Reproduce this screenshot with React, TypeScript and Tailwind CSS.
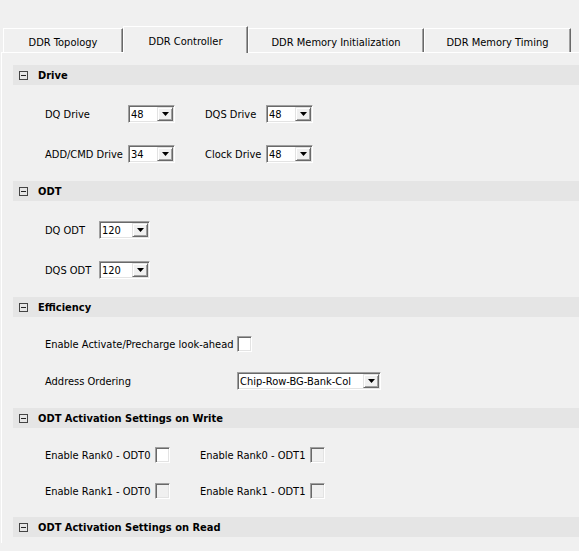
import React from "react";

function Combo({ value, w }: { value: string; w: string }) {
  return (
    <div
      className={`${w} h-[18px] flex items-center bg-white border border-t-[#a0a0a0] border-l-[#a0a0a0] border-b-white border-r-white shadow-[inset_1px_1px_0_#696969,inset_-1px_-1px_0_#e3e3e3] pl-[2px] pr-[1px]`}
    >
      <span className="flex-1 leading-none text-black pt-[1px]">{value}</span>
      <div className="w-[16px] h-[14px] bg-[#f0f0f0] border border-t-[#e3e3e3] border-l-[#e3e3e3] border-b-[#696969] border-r-[#696969] shadow-[inset_1px_1px_0_#ffffff,inset_-1px_-1px_0_#a0a0a0] flex items-center justify-center">
        <svg width="7" height="4" viewBox="0 0 7 4">
          <path d="M0 0H7L3.5 4Z" fill="#000" />
        </svg>
      </div>
    </div>
  );
}

function Check({ white }: { white?: boolean }) {
  return (
    <div
      className={`w-[15px] h-[16px] border border-t-[#a0a0a0] border-l-[#a0a0a0] border-b-white border-r-white shadow-[inset_1px_1px_0_#696969,inset_-1px_-1px_0_#e3e3e3] ${
        white ? "bg-white" : "bg-[#f0f0f0]"
      }`}
    />
  );
}

function Header({ title }: { title: string }) {
  return (
    <div className="h-[20px] bg-[#e5e5e5] flex items-center ml-[11px]">
      <div className="ml-[6px] w-[9px] h-[9px] border border-[#444] flex items-center justify-center">
        <div className="w-[5px] h-[1px] bg-[#222]" />
      </div>
      <span className="ml-[10px] pt-[3px] font-bold text-black">{title}</span>
    </div>
  );
}

function Tab({
  label,
  w,
  selected,
}: {
  label: string;
  w: string;
  selected?: boolean;
}) {
  return (
    <div
      className={`${w} ${
        selected ? "h-[27px] mb-[-1px] relative z-10 pt-[4px]" : "h-[24px] pt-[5px]"
      } bg-[#f0f0f0] border-t border-l border-t-white border-l-white border-r border-r-[#696969] shadow-[inset_-1px_0_0_#a0a0a0] flex items-center justify-center text-black`}
    >
      {label}
    </div>
  );
}

function Label({ w, ml, children }: { w: string; ml?: string; children: React.ReactNode }) {
  return <span className={`${w} ${ml ?? ""} pt-[2px]`}>{children}</span>;
}

export default function App() {
  return (
    <div className="w-[579px] h-[551px] bg-[#f0f0f0] overflow-hidden font-['DejaVu_Sans_Condensed','Liberation_Sans',Arial,sans-serif] text-[11px] text-black">
      <div className="h-[52px] flex items-end pl-[3px]">
        <Tab label="DDR Topology" w="w-[120px]" />
        <Tab label="DDR Controller" w="w-[125px]" selected />
        <Tab label="DDR Memory Initialization" w="w-[176px]" />
        <Tab label="DDR Memory Timing" w="w-[147px]" />
      </div>
      <div className="ml-[1px] h-[491px] border-t border-l border-white pt-[12px]">
        {/* Drive */}
        <Header title="Drive" />
        <div className="pl-[43px] pt-[9px] pb-[7px]">
          <div className="h-[40px] flex items-center">
            <Label w="w-[83px]">DQ Drive</Label>
            <Combo value="48" w="w-[47px]" />
            <Label w="w-[61px]" ml="ml-[30px]">DQS Drive</Label>
            <Combo value="48" w="w-[47px]" />
          </div>
          <div className="h-[40px] flex items-center">
            <Label w="w-[83px]">ADD/CMD Drive</Label>
            <Combo value="34" w="w-[47px]" />
            <Label w="w-[61px]" ml="ml-[30px]">Clock Drive</Label>
            <Combo value="48" w="w-[47px]" />
          </div>
        </div>
        {/* ODT */}
        <Header title="ODT" />
        <div className="pl-[43px] pt-[9px] pb-[7px]">
          <div className="h-[40px] flex items-center">
            <Label w="w-[54px]">DQ ODT</Label>
            <Combo value="120" w="w-[51px]" />
          </div>
          <div className="h-[40px] flex items-center">
            <Label w="w-[54px]">DQS ODT</Label>
            <Combo value="120" w="w-[51px]" />
          </div>
        </div>
        {/* Efficiency */}
        <Header title="Efficiency" />
        <div className="pl-[43px] pt-[7px] pb-[10px]">
          <div className="h-[40px] flex items-center">
            <Label w="w-[192px]">Enable Activate/Precharge look-ahead</Label>
            <Check white />
          </div>
          <div className="h-[34px] flex items-center">
            <Label w="w-[192px]">Address Ordering</Label>
            <Combo value="Chip-Row-BG-Bank-Col" w="w-[144px]" />
          </div>
        </div>
        {/* ODT Activation Settings on Write */}
        <Header title="ODT Activation Settings on Write" />
        <div className="pl-[43px] pt-[7px] pb-[10px]">
          <div className="h-[40px] flex items-center">
            <Label w="w-[110px]">Enable Rank0 - ODT0</Label>
            <Check white />
            <Label w="w-[110px]" ml="ml-[30px]">Enable Rank0 - ODT1</Label>
            <Check />
          </div>
          <div className="h-[32px] flex items-center">
            <Label w="w-[110px]">Enable Rank1 - ODT0</Label>
            <Check />
            <Label w="w-[110px]" ml="ml-[30px]">Enable Rank1 - ODT1</Label>
            <Check />
          </div>
        </div>
        {/* ODT Activation Settings on Read */}
        <Header title="ODT Activation Settings on Read" />
      </div>
    </div>
  );
}
